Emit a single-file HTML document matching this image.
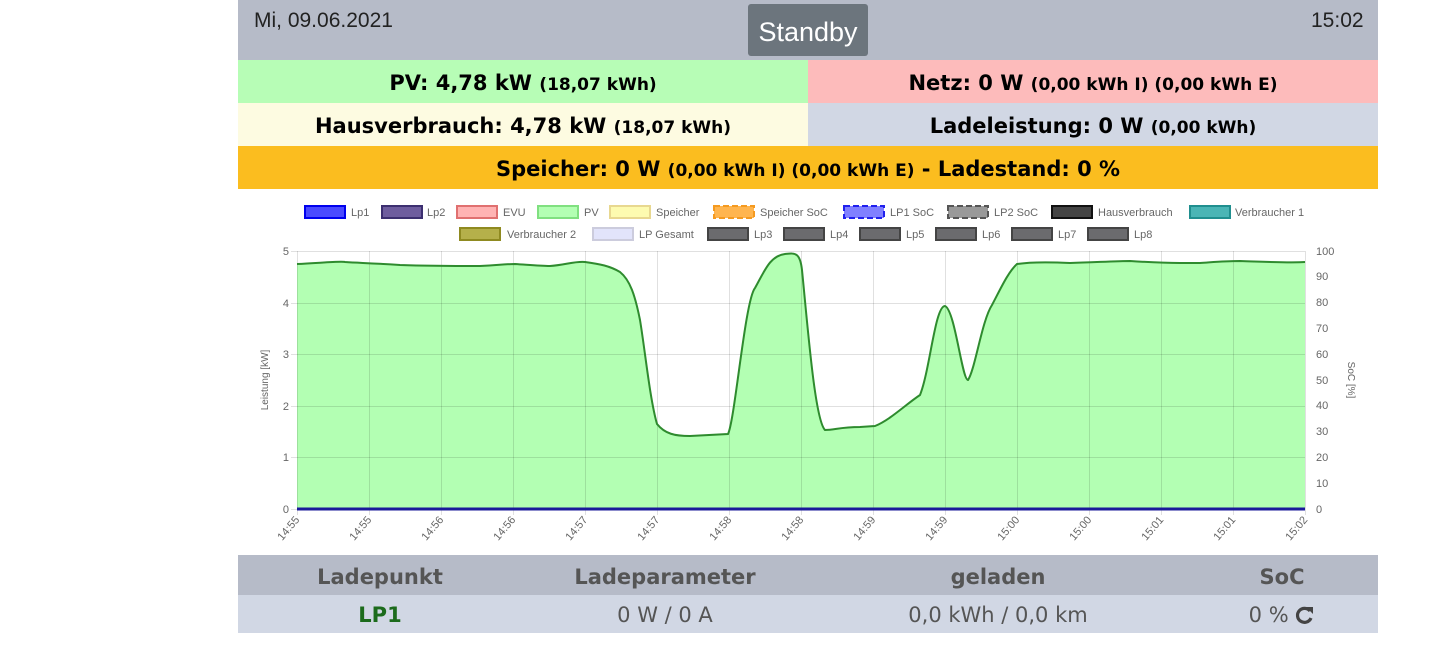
<!DOCTYPE html>
<html><head><meta charset="utf-8"><style>
body{margin:0;width:1449px;height:666px;background:#fff;font-family:"Liberation Sans",sans-serif;position:relative;overflow:hidden}
.a{position:absolute}
.hdr{left:238px;top:0;width:1140px;height:60px;background:#b6bbc8}
.row{position:absolute;height:43px;line-height:47px;text-align:center;font-weight:bold;font-size:21px;color:#000;font-family:"DejaVu Sans",sans-serif}
.row small{font-size:17px}
.tb{left:238px;width:1140px;background:#b6bbc8;height:40px}
.th{position:absolute;top:0;width:300px;margin-left:-150px;line-height:44px;font-size:21px;font-weight:bold;color:#555;text-align:center;font-family:"DejaVu Sans",sans-serif}
.td{position:absolute;top:0;width:300px;margin-left:-150px;line-height:40px;font-size:21px;color:#555;text-align:center;font-family:"DejaVu Sans",sans-serif}
</style></head><body>
<div class="a hdr"></div>
<div class="a" style="left:254px;top:9px;font-size:21px;color:#222">Mi, 09.06.2021</div>
<div class="a" style="left:1311px;top:9px;font-size:21px;color:#222">15:02</div>
<div class="a" style="left:748px;top:4px;width:120px;height:52px;background:#6c757d;border-radius:3px;color:#fff;font-size:27px;line-height:56px;text-align:center">Standby</div>
<div class="row" style="left:238px;top:60px;width:570px;background:#b7fdb6">PV: 4,78 kW <small>(18,07 kWh)</small></div>
<div class="row" style="left:808px;top:60px;width:570px;background:#fdbbbb">Netz: 0 W <small>(0,00 kWh I) (0,00 kWh E)</small></div>
<div class="row" style="left:238px;top:103px;width:570px;background:#fdfbe1">Hausverbrauch: 4,78 kW <small>(18,07 kWh)</small></div>
<div class="row" style="left:808px;top:103px;width:570px;background:#d1d7e4">Ladeleistung: 0 W <small>(0,00 kWh)</small></div>
<div class="row" style="left:238px;top:146px;width:1140px;background:#fbbd1f">Speicher: 0 W <small>(0,00 kWh I) (0,00 kWh E)</small> - Ladestand: 0 %</div>

<svg class="a" style="left:0;top:190px" width="1449" height="365" viewBox="0 190 1449 365" font-family="Liberation Sans,sans-serif" font-size="11" fill="#666">
<g stroke-width="2">
<rect x="305" y="206" width="40" height="12" fill="#4a4aff" stroke="#0000ee"/>
<rect x="382" y="206" width="40" height="12" fill="#6e5d9e" stroke="#3c2f70"/>
<rect x="457" y="206" width="40" height="12" fill="#ffb3b3" stroke="#e07070"/>
<rect x="538" y="206" width="40" height="12" fill="#b3ffb3" stroke="#80e080"/>
<rect x="610" y="206" width="40" height="12" fill="#fdfbb0" stroke="#e8d890"/>
<rect x="714" y="206" width="40" height="12" fill="#ffb54f" stroke="#f59a20" stroke-dasharray="6 3"/>
<rect x="844" y="206" width="40" height="12" fill="#8080ff" stroke="#2020ee" stroke-dasharray="6 3"/>
<rect x="948" y="206" width="40" height="12" fill="#999" stroke="#555" stroke-dasharray="6 3"/>
<rect x="1052" y="206" width="40" height="12" fill="#444" stroke="#111"/>
<rect x="1190" y="206" width="40" height="12" fill="#4ab5b5" stroke="#208f8f"/>
<rect x="460" y="228" width="40" height="12" fill="#b5b04a" stroke="#8f8a20"/>
<rect x="593" y="228" width="40" height="12" fill="#e2e4fb" stroke="#ccd"/>
<g fill="#6b6b6e" stroke="#444">
<rect x="708" y="228" width="40" height="12"/><rect x="784" y="228" width="40" height="12"/>
<rect x="860" y="228" width="40" height="12"/><rect x="936" y="228" width="40" height="12"/>
<rect x="1012" y="228" width="40" height="12"/><rect x="1088" y="228" width="40" height="12"/>
</g></g>
<g>
<text x="351" y="216">Lp1</text><text x="427" y="216">Lp2</text><text x="503" y="216">EVU</text>
<text x="584" y="216">PV</text><text x="656" y="216">Speicher</text><text x="760" y="216">Speicher SoC</text>
<text x="890" y="216">LP1 SoC</text><text x="994" y="216">LP2 SoC</text><text x="1098" y="216">Hausverbrauch</text>
<text x="1235" y="216">Verbraucher 1</text>
<text x="507" y="238">Verbraucher 2</text><text x="639" y="238">LP Gesamt</text>
<text x="754" y="238">Lp3</text><text x="830" y="238">Lp4</text><text x="906" y="238">Lp5</text>
<text x="982" y="238">Lp6</text><text x="1058" y="238">Lp7</text><text x="1134" y="238">Lp8</text>
</g>
<path d="M297,264 C320,263 340,261 345,262 C360,263 370,263 400,265 C430,266 460,266 480,266 C500,265 505,264 515,264 C530,265 540,266 550,266 C565,265 575,261 585,262 C600,264 610,266 620,272 C630,280 635,295 640,320 C645,350 650,400 657,424 C665,434 675,436 690,436 L728,434 C735,420 745,300 755,288 C765,270 770,256 785,254 C795,253 800,252 802,270 C808,330 815,420 825,430 C835,430 840,427 860,427 L875,426 C890,420 905,405 920,395 C930,370 935,306 945,306 C955,310 962,380 968,380 C975,370 982,320 992,305 C1000,290 1008,272 1017,264 C1030,262 1050,262 1070,263 C1100,262 1120,261 1130,261 C1145,262 1160,263 1180,263 L1200,263 C1215,262 1225,261 1240,261 C1270,262 1290,263 1305,262 L1305,509 L297,509 Z" fill="#b3ffb3"/>
<g stroke="rgba(0,0,0,0.12)" stroke-width="1">
<line x1="297" y1="251.5" x2="1305" y2="251.5"/><line x1="297" y1="303.5" x2="1305" y2="303.5"/>
<line x1="297" y1="354.5" x2="1305" y2="354.5"/><line x1="297" y1="406.5" x2="1305" y2="406.5"/>
<line x1="297" y1="457.5" x2="1305" y2="457.5"/>
<line x1="291" y1="251.5" x2="297" y2="251.5"/><line x1="291" y1="303.5" x2="297" y2="303.5"/><line x1="291" y1="354.5" x2="297" y2="354.5"/><line x1="291" y1="406.5" x2="297" y2="406.5"/><line x1="291" y1="457.5" x2="297" y2="457.5"/><line x1="291" y1="509.5" x2="297" y2="509.5"/>
<line x1="297.5" y1="251" x2="297.5" y2="515"/><line x1="369.5" y1="251" x2="369.5" y2="515"/><line x1="441.5" y1="251" x2="441.5" y2="515"/><line x1="513.5" y1="251" x2="513.5" y2="515"/><line x1="585.5" y1="251" x2="585.5" y2="515"/><line x1="657.5" y1="251" x2="657.5" y2="515"/><line x1="729.5" y1="251" x2="729.5" y2="515"/><line x1="801.5" y1="251" x2="801.5" y2="515"/><line x1="873.5" y1="251" x2="873.5" y2="515"/><line x1="945.5" y1="251" x2="945.5" y2="515"/><line x1="1017.5" y1="251" x2="1017.5" y2="515"/><line x1="1089.5" y1="251" x2="1089.5" y2="515"/><line x1="1161.5" y1="251" x2="1161.5" y2="515"/><line x1="1233.5" y1="251" x2="1233.5" y2="515"/><line x1="1305.5" y1="251" x2="1305.5" y2="515"/>
</g>
<path d="M297,264 C320,263 340,261 345,262 C360,263 370,263 400,265 C430,266 460,266 480,266 C500,265 505,264 515,264 C530,265 540,266 550,266 C565,265 575,261 585,262 C600,264 610,266 620,272 C630,280 635,295 640,320 C645,350 650,400 657,424 C665,434 675,436 690,436 L728,434 C735,420 745,300 755,288 C765,270 770,256 785,254 C795,253 800,252 802,270 C808,330 815,420 825,430 C835,430 840,427 860,427 L875,426 C890,420 905,405 920,395 C930,370 935,306 945,306 C955,310 962,380 968,380 C975,370 982,320 992,305 C1000,290 1008,272 1017,264 C1030,262 1050,262 1070,263 C1100,262 1120,261 1130,261 C1145,262 1160,263 1180,263 L1200,263 C1215,262 1225,261 1240,261 C1270,262 1290,263 1305,262" fill="none" stroke="#2e8b2e" stroke-width="2"/>
<line x1="297" y1="509" x2="1305" y2="509" stroke="#1a1a9a" stroke-width="3"/>
<g text-anchor="end">
<text x="289" y="255">5</text><text x="289" y="307">4</text><text x="289" y="358">3</text><text x="289" y="410">2</text><text x="289" y="461">1</text><text x="289" y="513">0</text>
</g>
<g>
<text x="1316" y="255">100</text><text x="1316" y="280">90</text><text x="1316" y="306">80</text><text x="1316" y="332">70</text><text x="1316" y="358">60</text><text x="1316" y="384">50</text><text x="1316" y="409">40</text><text x="1316" y="435">30</text><text x="1316" y="461">20</text><text x="1316" y="487">10</text><text x="1316" y="513">0</text>
</g>
<text transform="translate(268,380) rotate(-90)" text-anchor="middle" font-size="10">Leistung [kW]</text>
<text transform="translate(1348,380) rotate(90)" text-anchor="middle" font-size="10">SoC [%]</text>
<g text-anchor="end" font-size="11">
<text transform="translate(300,520) rotate(-50)">14:55</text><text transform="translate(372,520) rotate(-50)">14:55</text><text transform="translate(444,520) rotate(-50)">14:56</text><text transform="translate(516,520) rotate(-50)">14:56</text><text transform="translate(588,520) rotate(-50)">14:57</text><text transform="translate(660,520) rotate(-50)">14:57</text><text transform="translate(732,520) rotate(-50)">14:58</text><text transform="translate(804,520) rotate(-50)">14:58</text><text transform="translate(876,520) rotate(-50)">14:59</text><text transform="translate(948,520) rotate(-50)">14:59</text><text transform="translate(1020,520) rotate(-50)">15:00</text><text transform="translate(1092,520) rotate(-50)">15:00</text><text transform="translate(1164,520) rotate(-50)">15:01</text><text transform="translate(1236,520) rotate(-50)">15:01</text><text transform="translate(1308,520) rotate(-50)">15:02</text>
</g>
</svg>

<div class="a tb" style="top:555px">
<div class="th" style="left:142px">Ladepunkt</div>
<div class="th" style="left:427px">Ladeparameter</div>
<div class="th" style="left:760px">geladen</div>
<div class="th" style="left:1044px">SoC</div>
</div>
<div class="a tb" style="top:595px;background:#d1d7e4;height:38px">
<div class="td" style="left:142px;color:#1c6b1c;font-weight:bold">LP1</div>
<div class="td" style="left:427px">0 W / 0 A</div>
<div class="td" style="left:760px">0,0 kWh / 0,0 km</div>
<div class="td" style="left:1044px">0 % <svg width="20" height="20" viewBox="0 0 20 20" style="vertical-align:-3px"><path d="M15,6 A7,7 0 1 0 16,13" fill="none" stroke="#444" stroke-width="3.2"/><path d="M11,2 L18,2 L18,9 Z" fill="#444"/></svg></div>
</div>
</body></html>
